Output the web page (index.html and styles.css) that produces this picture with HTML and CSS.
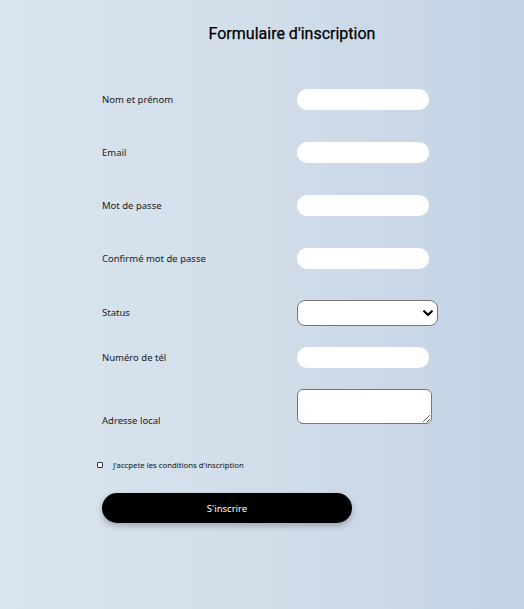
FILE: index.html
```html
<!DOCTYPE html>
<html lang="fr">
<head>
<meta charset="utf-8">
<title>Formulaire d'inscription</title>
<link rel="stylesheet" href="styles.css">
</head>
<body>
<div class="page">
  <form class="form">
    <h1 class="title">Formulaire d'inscription</h1>
    <div class="row row-first">
      <label class="label" for="nom">Nom et prénom</label>
      <input class="field" id="nom" type="text">
    </div>
    <div class="row">
      <label class="label" for="email">Email</label>
      <input class="field" id="email" type="email">
    </div>
    <div class="row">
      <label class="label" for="mdp">Mot de passe</label>
      <input class="field" id="mdp" type="password">
    </div>
    <div class="row">
      <label class="label" for="cmdp">Confirmé mot de passe</label>
      <input class="field" id="cmdp" type="password">
    </div>
    <div class="row row-select">
      <label class="label" for="status">Status</label>
      <div class="select-wrap">
        <select class="select" id="status"><option></option></select>
        <svg class="chevron" width="10" height="7" viewBox="0 0 10 7"><path d="M1.2 1.2 L5 5 L8.8 1.2" fill="none" stroke="#000" stroke-width="2.2" stroke-linecap="round" stroke-linejoin="round"/></svg>
      </div>
    </div>
    <div class="row row-tight">
      <label class="label" for="tel">Numéro de tél</label>
      <input class="field" id="tel" type="tel">
    </div>
    <div class="row row-area">
      <label class="label label-area" for="adr">Adresse local</label>
      <textarea class="area" id="adr"></textarea>
    </div>
    <div class="check-row">
      <input class="check" type="checkbox" id="cgu">
      <label class="check-label" for="cgu">J'accpete les conditions d'inscription</label>
    </div>
    <button class="submit" type="button">S'inscrire</button>
  </form>
</div>
</body>
</html>
```
FILE: styles.css
```css
html, body {
  margin: 0;
  padding: 0;
}
body {
  width: 524px;
  height: 609px;
  background: linear-gradient(to right, #d9e5ee 0%, #d1dde9 50%, #c3d3e5 100%);
  font-family: "Noto Sans", "Open Sans", sans-serif;
  color: #111;
  overflow: hidden;
}
.page {
  padding: 0 42px 0 102px;
}
.form {
  display: flex;
  flex-direction: column;
  width: 380px;
}
.title {
  margin: 24px 0 0;
  text-align: center;
  font-family: Roboto, sans-serif;
  font-weight: 400;
  font-size: 16px;
  line-height: 19px;
  color: #000;
  -webkit-text-stroke: 0.25px #000;
}
.row {
  display: flex;
  align-items: center;
  margin-top: 32px;
}
.row-first {
  margin-top: 46px;
}
.row-select {
  margin-top: 31px;
}
.row-tight {
  margin-top: 21px;
}
.row-area {
  margin-top: 21px;
  align-items: flex-end;
}
.label {
  width: 195px;
  font-size: 9.5px;
  line-height: 12px;
  color: #1a1a1a;
}
.label-area {
  margin-bottom: -3px;
}
.field {
  box-sizing: border-box;
  width: 132px;
  height: 21px;
  border: none;
  border-radius: 10px;
  background: #fff;
  padding: 0 8px;
  margin: 0;
  outline: none;
}
.select-wrap {
  position: relative;
  width: 141px;
  height: 26px;
}
.select {
  -webkit-appearance: none;
  appearance: none;
  box-sizing: border-box;
  width: 141px;
  height: 26px;
  margin: 0;
  border: 1px solid #767676;
  border-radius: 8px;
  background: #fff;
}
.chevron {
  position: absolute;
  right: 5px;
  top: 10px;
  pointer-events: none;
}
.area {
  box-sizing: border-box;
  width: 135px;
  height: 35px;
  margin: 0;
  border: 1px solid #767676;
  border-radius: 6px;
  background: #fff;
  resize: both;
  display: block;
}
.check-row {
  display: flex;
  align-items: center;
  margin: 36px 0 0 -5px;
}
.check {
  -webkit-appearance: none;
  appearance: none;
  box-sizing: border-box;
  width: 6px;
  height: 6px;
  margin: 0 10px 0 0;
  border: 1px solid #333;
  border-radius: 1px;
  background: #fff;
}
.check-label {
  font-size: 7.75px;
  line-height: 10px;
  color: #111;
}
.submit {
  margin-top: 23px;
  width: 250px;
  height: 30px;
  border: none;
  border-radius: 15px;
  background: #000;
  color: #fff;
  font-family: "Noto Sans", sans-serif;
  font-size: 9.5px;
  box-shadow: 0 3px 6px rgba(0, 0, 0, 0.25);
  cursor: pointer;
}
```
